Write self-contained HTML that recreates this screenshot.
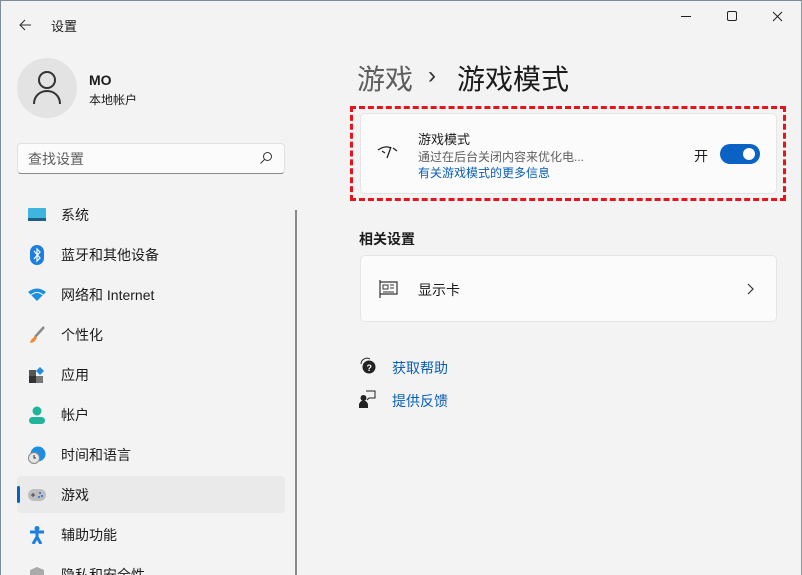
<!DOCTYPE html>
<html><head><meta charset="utf-8"><style>
*{margin:0;padding:0;box-sizing:border-box}
html{width:802px;height:575px;overflow:hidden}
body{width:802px;height:575px;overflow:hidden;background:#f3f3f3;font-family:"Liberation Sans","Noto Sans CJK SC",sans-serif;color:#1b1b1b;position:relative;font-size:14px}
.win{position:absolute;left:0;top:0;width:802px;height:575px;border:1px solid #7d8d99;border-bottom:none;border-right:1px solid #8a9aa6}
.abs{position:absolute}
.nav{position:absolute;left:17px;height:37px;width:268px;display:flex;align-items:center;font-size:14px}
.nav .ic{width:20px;margin-left:10px;margin-right:14px;display:flex;justify-content:center}
.card{position:absolute;background:#fbfbfb;border:1px solid #e5e5e5;border-radius:5px}
</style></head><body>
<div class="win"></div>
<svg class="abs" style="left:17px;top:17px" width="16" height="16"><path d="M14 8H3M8 3L3 8l5 5" stroke="#333" stroke-width="1.1" fill="none"/></svg>
<div class="abs" style="left:51px;top:16px;font-size:13px">设置</div>
<svg class="abs" style="left:680px;top:10px" width="105" height="16"><path d="M1 6.5h10" stroke="#222"/><rect x="47.5" y="1.5" width="9" height="9" rx="1.5" stroke="#222" fill="none"/><path d="M93 2l9 9M102 2l-9 9" stroke="#222"/></svg>
<div class="abs" style="left:17px;top:58px;width:60px;height:60px;border-radius:50%;background:#e3e3e3"></div>
<svg class="abs" style="left:32px;top:70px" width="30" height="36"><circle cx="15" cy="10" r="8" stroke="#333" stroke-width="2" fill="none"/><path d="M2 34c0-8 6-13 13-13s13 5 13 13" stroke="#333" stroke-width="2" fill="none"/></svg>
<div class="abs" style="left:89px;top:72px;font-size:14px;font-weight:bold">MO</div>
<div class="abs" style="left:89px;top:91px;font-size:12px">本地帐户</div>
<div class="abs" style="left:17px;top:143px;width:268px;height:31px;background:#fbfbfb;border:1px solid #e0e0e0;border-bottom:1px solid #8a8a8a;border-radius:4px"></div>
<div class="abs" style="left:28px;top:149px;font-size:14px;color:#5f5f5f">查找设置</div>
<svg class="abs" style="left:259px;top:151px" width="14" height="14"><circle cx="8.5" cy="5.5" r="4" stroke="#333" fill="none"/><path d="M5.5 8.5L1.5 12.5" stroke="#333"/></svg>
<div class="abs" style="left:295px;top:210px;width:2px;height:365px;background:#8a8a8a"></div>
<div class="nav" style="top:196px"><span class="ic"><svg width="18" height="14"><rect width="18" height="13" rx="1" fill="#3fb4dc"/><rect y="10" width="18" height="3" fill="#1c5f86"/></svg></span>系统</div>
<div class="nav" style="top:236px"><span class="ic"><svg width="14" height="20"><rect width="14" height="20" rx="7" fill="#1c7ee0"/><path d="M4 6l6 7-3 3V4l3 3-6 7" stroke="#fff" stroke-width="1.2" fill="none"/></svg></span>蓝牙和其他设备</div>
<div class="nav" style="top:276px"><span class="ic"><svg width="18" height="14"><path d="M0 4Q9-3 18 4L9 13z" fill="#1c8fe0"/><path d="M3 7Q9 2 15 7" stroke="#fff" stroke-width="1" fill="none"/></svg></span>网络和 Internet</div>
<div class="nav" style="top:316px"><span class="ic"><svg width="16" height="18"><path d="M15 1L6 11" stroke="#888" stroke-width="2.5"/><path d="M6 10l-4 4-1 3 4-1 3-4z" fill="#f08a2c"/></svg></span>个性化</div>
<div class="nav" style="top:356px"><span class="ic"><svg width="16" height="16"><rect y="3" width="7" height="6" fill="#555"/><rect y="9" width="7" height="7" fill="#333"/><rect x="7" y="9" width="7" height="7" fill="#777"/><path d="M11 0l4 4-4 4-4-4z" fill="#1c8fe0"/></svg></span>应用</div>
<div class="nav" style="top:396px"><span class="ic"><svg width="16" height="18"><circle cx="8" cy="5" r="4.5" fill="#1fb59a"/><rect x="0" y="11" width="16" height="7" rx="3.5" fill="#1fb59a"/></svg></span>帐户</div>
<div class="nav" style="top:436px"><span class="ic"><svg width="18" height="18"><circle cx="10" cy="8" r="7.5" fill="#1c8fe0"/><circle cx="6" cy="12" r="5.5" fill="#e5e5e5" stroke="#888"/><path d="M6 9v3h2" stroke="#333" fill="none"/></svg></span>时间和语言</div>
<div class="abs" style="left:17px;top:476px;width:268px;height:37px;background:#eaeaea;border-radius:4px"></div>
<div class="abs" style="left:17px;top:486px;width:3px;height:17px;background:#0a5fc4;border-radius:2px"></div>
<div class="nav" style="top:476px"><span class="ic"><svg width="18" height="12"><rect width="18" height="12" rx="6" fill="#bdbdbd"/><path d="M3 6h4M5 4v4" stroke="#444"/><circle cx="12" cy="4" r="1" fill="#1c6fd0"/><circle cx="14" cy="7" r="1" fill="#1c6fd0"/><circle cx="11" cy="8" r="1" fill="#1c6fd0"/></svg></span>游戏</div>
<div class="nav" style="top:516px"><span class="ic"><svg width="16" height="18"><circle cx="8" cy="2.5" r="2.5" fill="#1c7ee0"/><path d="M1 6h14M8 6v5M8 11l-4 7M8 11l4 7" stroke="#1c7ee0" stroke-width="3"/></svg></span>辅助功能</div>
<div class="nav" style="top:556px"><span class="ic"><svg width="16" height="18"><path d="M8 1l7 3v5c0 5-7 8-7 8S1 14 1 9V4z" fill="#aaa"/></svg></span>隐私和安全性</div>
<div class="abs" style="left:357px;top:58px;font-size:28px;color:#5e5e5e">游戏</div>
<div class="abs" style="left:428px;top:62px;font-size:24px;color:#333">›</div>
<div class="abs" style="left:457px;top:58px;font-size:28px;color:#1b1b1b">游戏模式</div>
<div class="card" style="left:360px;top:113px;width:417px;height:81px"></div>
<div class="abs" style="left:350px;top:106px;width:436px;height:95px;border:3px dashed #e8141c"></div>
<svg class="abs" style="left:377px;top:145px" width="22" height="15"><path d="M1 5Q8 0 14 3M10 13L14 2M16 3L20 6M5 6l3 2" stroke="#222" stroke-width="1.3" fill="none"/></svg>
<div class="abs" style="left:418px;top:129px;font-size:13px">游戏模式</div>
<div class="abs" style="left:418px;top:148px;font-size:12px;color:#5f5f5f">通过在后台关闭内容来优化电...</div>
<div class="abs" style="left:418px;top:164px;font-size:12px;color:#0a5fb4">有关游戏模式的更多信息</div>
<div class="abs" style="left:694px;top:146px;font-size:14px">开</div>
<div class="abs" style="left:720px;top:144px;width:40px;height:20px;border-radius:10px;background:#0a63c4"></div>
<div class="abs" style="left:743px;top:148px;width:12px;height:12px;border-radius:50%;background:#fff"></div>
<div class="abs" style="left:359px;top:229px;font-size:14px;font-weight:bold;color:#1b1b1b">相关设置</div>
<div class="card" style="left:360px;top:255px;width:417px;height:67px"></div>
<svg class="abs" style="left:379px;top:280px" width="20" height="18"><path d="M1 0v18M1 2h17v12H1" stroke="#333" stroke-width="1.2" fill="none"/><rect x="4" y="5" width="5" height="4" stroke="#333" fill="none"/><path d="M11 5h4M11 8h4M4 12h11" stroke="#333"/></svg>
<div class="abs" style="left:418px;top:280px;font-size:14px">显示卡</div>
<svg class="abs" style="left:747px;top:283px" width="8" height="12"><path d="M1 1l5 5-5 5" stroke="#333" stroke-width="1.2" fill="none"/></svg>
<svg class="abs" style="left:359px;top:357px" width="18" height="18"><circle cx="10" cy="10" r="6.5" fill="#222"/><path d="M2 7a6 6 0 0 1 9-5" stroke="#222" fill="none"/><text x="7.5" y="14" font-size="9" fill="#fff" font-family="Liberation Sans" font-weight="bold">?</text></svg>
<div class="abs" style="left:392px;top:358px;font-size:14px;color:#0a5fb4">获取帮助</div>
<svg class="abs" style="left:359px;top:390px" width="18" height="18"><circle cx="4.5" cy="8" r="3" fill="#222"/><path d="M0 18v-3a4 4 0 0 1 9 0v3z" fill="#222"/><path d="M7 1h9v7h-6l-2 2" stroke="#222" fill="none"/></svg>
<div class="abs" style="left:392px;top:391px;font-size:14px;color:#0a5fb4">提供反馈</div>
</body></html>
